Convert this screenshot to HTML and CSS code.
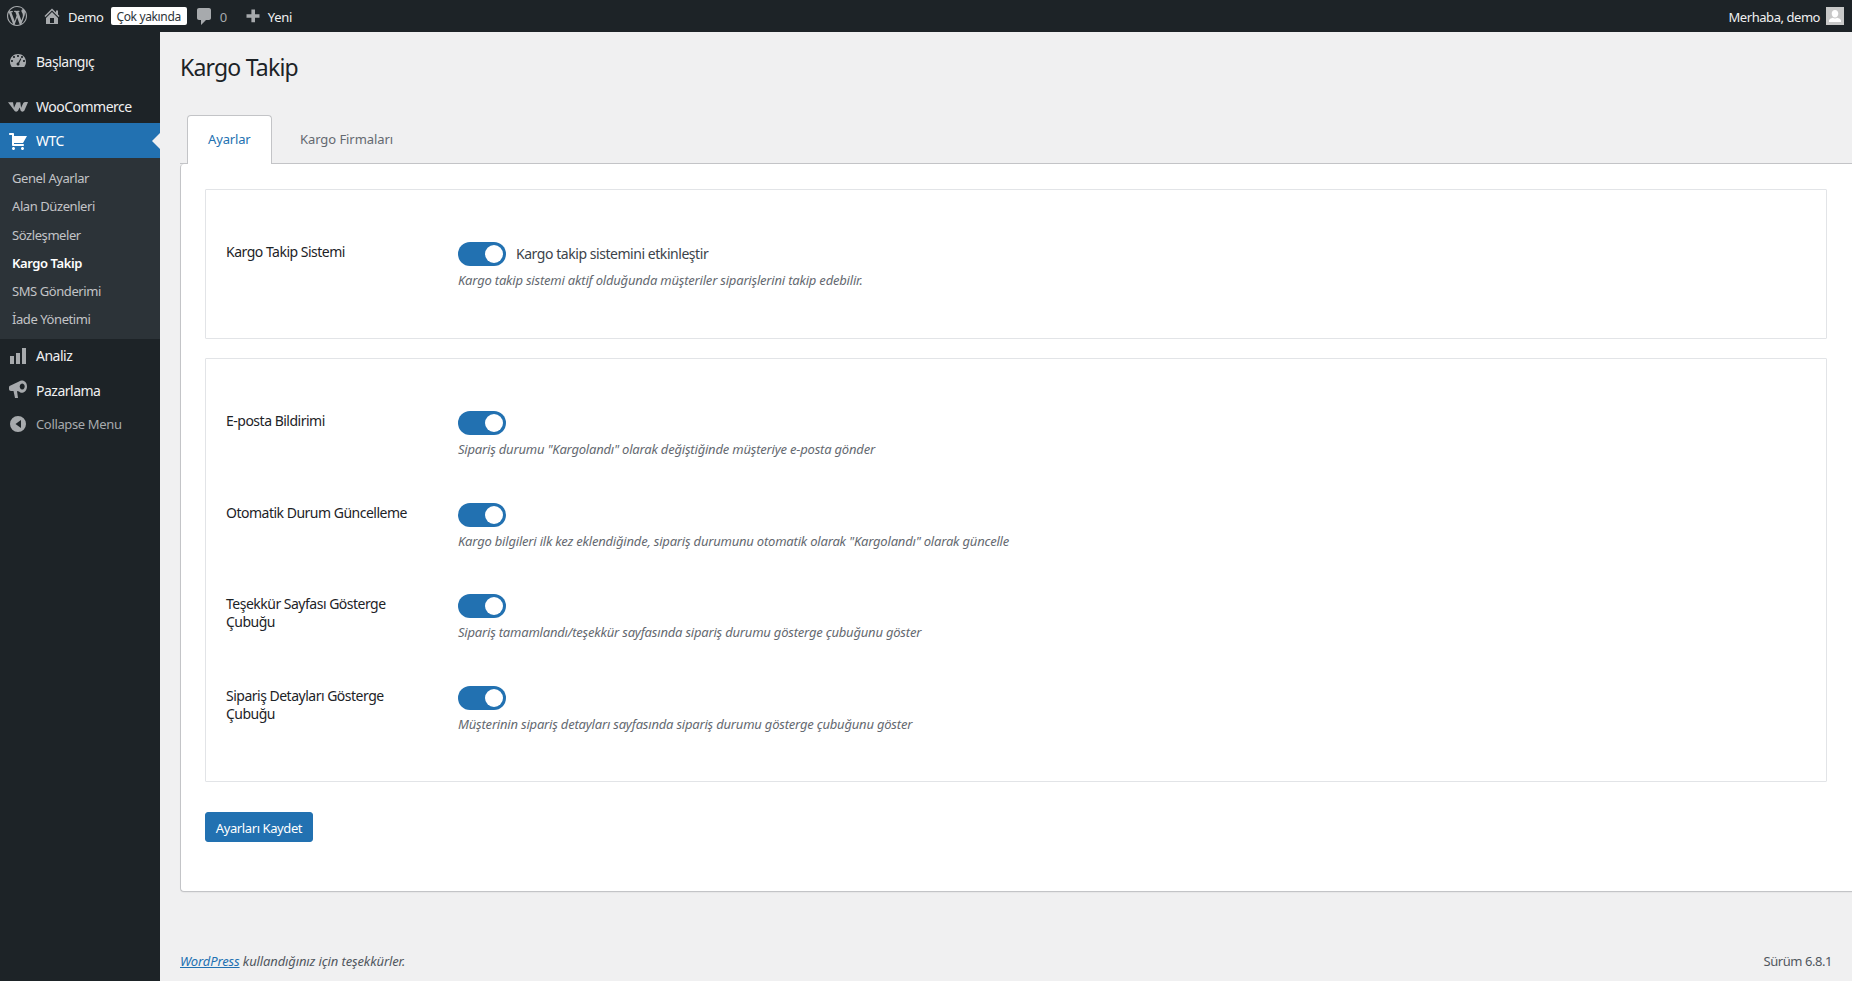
FILE: index.html
```html
<!DOCTYPE html>
<html lang="tr">
<head>
<meta charset="utf-8">
<title>Kargo Takip</title>
<link rel="stylesheet" href="styles.css">
</head>
<body>
<header class="adminbar">
  <div class="bar-left">
    <svg class="ab-logo" viewBox="0 0 20 20"><path fill-rule="evenodd" d="M20 10c0-5.510-4.490-10-10-10C4.480 0 0 4.490 0 10c0 5.520 4.480 10 10 10 5.510 0 10-4.480 10-10zM7.780 15.370L4.370 6.220c.55-.02 1.170-.08 1.170-.08.5-.06.44-1.130-.06-1.110 0 0-1.450.11-2.370.11-.18 0-.37 0-.58-.01C4.120 2.690 6.890 1.030 10 1.030c2.320 0 4.430.87 6.030 2.340-.68-.11-1.650.39-1.650 1.580 0 .74.45 1.360.9 2.100.35.61.55 1.360.55 2.460 0 1.490-1.400 5-1.400 5l-3.030-8.350c.54-.02.82-.17.82-.17.5-.05.44-1.250-.06-1.220 0 0-1.440.12-2.380.12-.87 0-2.330-.12-2.330-.12-.5-.03-.56 1.200-.06 1.220l.92.08 1.260 3.410zM17.410 10c.24-.64.74-1.870.43-4.250.7 1.290 1.050 2.710 1.050 4.250 0 3.290-1.730 6.240-4.400 7.790.97-2.590 1.940-5.200 2.920-7.790zM6.100 18.090C3.120 16.650 1.110 13.530 1.110 10c0-1.300.23-2.480.72-3.590C3.250 10.300 4.670 14.200 6.100 18.090zm4.030-6.630l2.580 6.980c-.86.29-1.750.45-2.710.45-.79 0-1.570-.11-2.290-.33.81-2.380 1.620-4.740 2.420-7.100z"/></svg>
    <svg class="ab-icon ab-home" viewBox="0 0 20 20"><path fill-rule="evenodd" d="M16 8.500l1.530 1.530-1.060 1.060L10 4.620l-6.470 6.470-1.060-1.060L10 2.500l4 4v-2h2v4zm-6-2.460l6 5.990V18H4v-5.970zM12 17v-5H8v5h4z"/></svg>
    <span class="ab-text ab-site">Demo</span>
    <span class="ab-badge">Çok yakında</span>
    <svg class="ab-icon ab-comment" viewBox="0 0 20 20"><path d="M5 2h10c1.100 0 2 .9 2 2v8c0 1.100-.9 2-2 2h-3l-5 5v-5H5c-1.100 0-2-.9-2-2V4c0-1.100.9-2 2-2z"/></svg>
    <span class="ab-text ab-count">0</span>
    <svg class="ab-icon ab-plus" viewBox="0 0 20 20"><path d="M16.500 8.200v3.600H12v4.500H8.400v-4.500H3.500V8.200h4.900V3.500H12v4.700z"/></svg>
    <span class="ab-text">Yeni</span>
  </div>
  <div class="bar-right">
    <span class="ab-text ab-greet">Merhaba, demo</span>
    <span class="avatar"><svg viewBox="0 0 18 18"><rect width="18" height="18" fill="#c8c8c8"/><path fill="#fff" d="M9 3c2 0 3.300 1.500 3.300 3.600 0 2-1.200 4-3.300 4s-3.300-2-3.300-4C5.700 4.500 7 3 9 3zM3 15v-1.500c0-1.300 2-2.300 3.800-2.800.6.500 1.300.8 2.200.8s1.600-.3 2.200-.8c1.800.5 3.800 1.500 3.800 2.800V15z"/></svg></span>
  </div>
</header>
<div class="layout">
  <nav class="sidebar">
    <ul class="menu">
      <li class="menu-item first"><svg class="m-icon" viewBox="0 0 20 20"><path fill-rule="evenodd" d="M3.760 16h12.480c1.100-1.430 1.760-3.210 1.760-5.150C18 6.210 14.420 3 10 3S2 6.210 2 10.850c0 1.940.66 3.720 1.760 5.150zM10 4c.55 0 1 .45 1 1s-.45 1-1 1-1-.45-1-1 .45-1 1-1zM6 5c.55 0 1 .45 1 1s-.45 1-1 1-1-.45-1-1 .45-1 1-1zm8 0c.55 0 1 .45 1 1s-.45 1-1 1-1-.45-1-1 .45-1 1-1zM4 9c.55 0 1 .45 1 1s-.45 1-1 1-1-.45-1-1 .45-1 1-1zm12 0c.55 0 1 .45 1 1s-.45 1-1 1-1-.45-1-1 .45-1 1-1zm-3.500-1.700l.9.5-2.200 4.400c.2.300.3.500.3.800 0 1-.7 1.500-1.500 1.500s-1.500-.6-1.500-1.500.8-1.500 1.700-1.500z"/></svg><span>Başlangıç</span></li>
      <li class="menu-item woo"><svg class="m-icon woo-icon" viewBox="0 0 20 10"><path d="M0 .2h5l1 5.500L8.500.2h3.800l.8 5.500L15.300 1c.7-1 2.700-1.300 4.700-.8l-3.600 8.300c-.7 1.500-3.300 1.500-3.800 0l-.9-3-1.600 3c-.7 1.500-3.300 1.500-3.800 0z"/></svg><span>WooCommerce</span></li>
      <li class="menu-item active"><svg class="m-icon" viewBox="0 0 20 20"><path d="M6 13h9c.55 0 1 .45 1 1s-.45 1-1 1H5c-.55 0-1-.45-1-1V4H2c-.55 0-1-.45-1-1s.45-1 1-1h3c.55 0 1 .45 1 1v2h13l-4 7H6v1zm-.5 3c.83 0 1.500.67 1.500 1.500S6.330 19 5.500 19 4 18.330 4 17.500 4.670 16 5.500 16zm9 0c.83 0 1.500.67 1.500 1.500s-.67 1.500-1.500 1.500-1.500-.67-1.500-1.500.67-1.500 1.500-1.500z"/></svg><span>WTC</span></li>
      <li>
        <ul class="submenu">
          <li>Genel Ayarlar</li>
          <li>Alan Düzenleri</li>
          <li>Sözleşmeler</li>
          <li class="current">Kargo Takip</li>
          <li>SMS Gönderimi</li>
          <li>İade Yönetimi</li>
        </ul>
      </li>
      <li class="menu-item analiz"><svg class="m-icon" viewBox="0 0 20 20"><path d="M18 18V2h-4v16h4zm-6 0V7H8v11h4zm-6 0v-8H2v8h4z"/></svg><span>Analiz</span></li>
      <li class="menu-item"><svg class="m-icon" viewBox="0 0 20 20"><path fill-rule="evenodd" d="M1.500 6L11 1.500C12.500.3 14 .3 15.500.8 18 1.800 19 4 19 6.500c0 3-2 6-4.500 6.300-1.500.2-2.500-.3-3.500-1.300L9 11l1 7H7l-1.500-7H3c-1.200 0-2-1-2-2V7.500c0-.6.1-1.200.5-1.500zM14.200 3.500a2.500 3 0 1 0 .01 0z"/></svg><span>Pazarlama</span></li>
      <li class="menu-item collapse"><svg class="m-icon" viewBox="0 0 20 20"><path fill-rule="evenodd" d="M10 2a8 8 0 1 1 0 16a8 8 0 0 1 0-16zM13 6v8l-5.500-4z"/></svg><span>Collapse Menu</span></li>
    </ul>
  </nav>
  <main class="content">
    <h1 class="page-title">Kargo Takip</h1>
    <div class="tabs">
      <a class="tab tab-active">Ayarlar</a>
      <a class="tab">Kargo Firmaları</a>
    </div>
    <section class="panel">
      <div class="card card-first">
        <div class="row">
          <div class="row-label">Kargo Takip Sistemi</div>
          <div class="row-field">
            <div class="toggle-line"><span class="toggle"></span><span class="toggle-text">Kargo takip sistemini etkinleştir</span></div>
            <p class="desc">Kargo takip sistemi aktif olduğunda müşteriler siparişlerini takip edebilir.</p>
          </div>
        </div>
      </div>
      <div class="card card-second">
        <div class="row">
          <div class="row-label">E-posta Bildirimi</div>
          <div class="row-field">
            <div class="toggle-line"><span class="toggle"></span></div>
            <p class="desc">Sipariş durumu "Kargolandı" olarak değiştiğinde müşteriye e-posta gönder</p>
          </div>
        </div>
        <div class="row">
          <div class="row-label">Otomatik Durum Güncelleme</div>
          <div class="row-field">
            <div class="toggle-line"><span class="toggle"></span></div>
            <p class="desc">Kargo bilgileri ilk kez eklendiğinde, sipariş durumunu otomatik olarak "Kargolandı" olarak güncelle</p>
          </div>
        </div>
        <div class="row">
          <div class="row-label">Teşekkür Sayfası Gösterge Çubuğu</div>
          <div class="row-field">
            <div class="toggle-line"><span class="toggle"></span></div>
            <p class="desc">Sipariş tamamlandı/teşekkür sayfasında sipariş durumu gösterge çubuğunu göster</p>
          </div>
        </div>
        <div class="row">
          <div class="row-label">Sipariş Detayları Gösterge Çubuğu</div>
          <div class="row-field">
            <div class="toggle-line"><span class="toggle"></span></div>
            <p class="desc">Müşterinin sipariş detayları sayfasında sipariş durumu gösterge çubuğunu göster</p>
          </div>
        </div>
      </div>
      <button class="save" type="button">Ayarları Kaydet</button>
    </section>
    <footer class="foot">
      <span class="thanks"><a class="foot-link">WordPress</a> kullandığınız için teşekkürler.</span>
      <span class="version">Sürüm 6.8.1</span>
    </footer>
  </main>
</div>
</body>
</html>
```
FILE: styles.css
```css
* { box-sizing: border-box; }
html, body { margin: 0; padding: 0; height: 981px; overflow: hidden; }
body { font-family: "Noto Sans", "Open Sans", sans-serif; font-size: 13px; color: #3c434a; background: #f0f0f1; }
ul { list-style: none; margin: 0; padding: 0; }

.adminbar { height: 32px; background: #1d2327; display: flex; justify-content: space-between; align-items: center; color: #f0f0f1; }
.bar-left, .bar-right { display: flex; align-items: center; height: 32px; }
.ab-logo { width: 20px; height: 20px; margin-left: 7px; fill: #a7aaad; }
.ab-icon { width: 20px; height: 20px; fill: #a7aaad; }
.ab-home { margin-left: 15px; }
.ab-text { font-size: 13px; color: #f0f0f1; letter-spacing: -.3px; padding-top: 2px; }
.ab-greet { letter-spacing: -.45px; }
.ab-site { margin-left: 6px; }
.ab-badge { margin-left: 7px; height: 18px; width: 76px; padding-top: 1px; background: #fff; color: #2c3338; border-radius: 2px; font-size: 12px; line-height: 18px; text-align: center; letter-spacing: -.35px; }
.ab-comment { margin-left: 7px; }
.ab-count { margin-left: 6px; color: #a7aaad; }
.ab-plus { margin-left: 16px; margin-right: 5px; }
.bar-right { padding-right: 8px; }
.avatar { width: 18px; height: 18px; margin-left: 6px; display: block; }
.avatar svg { display: block; }

.layout { display: flex; height: 949px; }
.sidebar { width: 160px; flex: none; background: #1d2327; }
.menu { padding-top: 12px; }
.menu-item { height: 34px; display: flex; align-items: center; color: #f0f0f1; font-size: 14px; letter-spacing: -.5px; }
.m-icon { width: 20px; height: 20px; margin-left: 8px; margin-right: 8px; flex: none; fill: #a7aaad; }
.first { margin-bottom: 12px; }
.woo { height: 33px; }
.woo-icon { height: 10px; }
.active { height: 35px; background: #2271b1; color: #fff; position: relative; }
.active .m-icon { fill: #fff; }
.active::after { content: ""; position: absolute; right: 0; top: 10px; border: 8px solid transparent; border-right-color: #f0f0f1; border-left-width: 0; }
.submenu { background: #2c3338; height: 181px; padding-top: 6px; }
.submenu li { height: 28.3px; line-height: 28px; padding-left: 12px; font-size: 13px; color: #c3c4c7; letter-spacing: -.42px; }
.submenu .current { color: #fff; font-weight: 600; }
.analiz { height: 33px; margin-bottom: 1px; }
.collapse { color: #a7aaad; font-size: 13px; letter-spacing: -.35px; }

.content { flex: 1; min-width: 0; padding-left: 20px; display: flex; flex-direction: column; }
.page-title { margin: 19px 0 0; height: 32px; line-height: 32px; font-size: 23px; font-weight: 400; color: #1d2327; letter-spacing: -.8px; }
.tabs { margin-top: 32px; height: 49px; padding-left: 7px; display: flex; border-bottom: 1px solid #c3c4c7; }
.tab { height: 49px; display: block; line-height: 48px; padding: 0 20px; font-size: 13px; color: #646970; letter-spacing: -.07px; }
.tab-active { width: 85px; line-height: 46px; background: #fff; border: 1px solid #c3c4c7; border-bottom: 0; border-radius: 4px 4px 0 0; color: #2271b1; letter-spacing: -.15px; }
.tab-active + .tab { padding-left: 28px; }

.panel { height: 728px; background: #fff; border: 1px solid #c3c4c7; border-top: 0; border-right: 0; border-radius: 4px 0 0 4px; padding: 25px 25px 0 24px; box-shadow: 0 1px 1px rgba(0,0,0,.04); }
.card { border: 1px solid #e2e4e7; border-radius: 1px; padding: 0 20px; }
.card-first { height: 150px; padding-top: 53px; }
.card-second { height: 424px; margin-top: 19px; padding-top: 53px; }
.row { display: flex; height: 91.6px; }
.row-label { width: 232px; flex: none; font-size: 14px; line-height: 18px; color: #1d2327; padding-right: 40px; letter-spacing: -.5px; }
.row-field { flex: 1; margin-top: -1px; }
.toggle-line { display: flex; align-items: center; height: 24px; }
.toggle { display: block; width: 48px; height: 24px; border-radius: 12px; background: #2271b1; position: relative; flex: none; }
.toggle::after { content: ""; position: absolute; right: 3px; top: 3px; width: 18px; height: 18px; border-radius: 50%; background: #fff; }
.toggle-text { margin-left: 10px; margin-top: -2px; font-size: 14px; color: #3c434a; letter-spacing: -.45px; }
.desc { margin: 5px 0 0; font-size: 13px; line-height: 18px; font-style: italic; color: #646970; letter-spacing: -.2px; }
.save { display: block; margin-top: 30px; width: 108px; height: 30px; padding: 2px 0 0; border: 1px solid #2271b1; border-radius: 3px; background: #2271b1; color: #fff; font-family: inherit; font-size: 13px; letter-spacing: -.4px; }

.foot { margin-top: 60px; padding-right: 20px; display: flex; justify-content: space-between; height: 18px; line-height: 18px; font-size: 13px; }
.thanks { font-style: italic; color: #50575e; letter-spacing: -.12px; }
.foot-link { color: #2271b1; text-decoration: underline; }
.version { color: #50575e; letter-spacing: -.45px; }
```
